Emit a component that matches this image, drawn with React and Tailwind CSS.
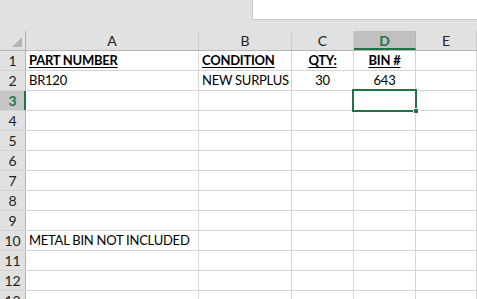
import React from 'react';

const COLS = [
  { key: 'A', width: 'w-[173px]' },
  { key: 'B', width: 'w-[93px]' },
  { key: 'C', width: 'w-[62px]' },
  { key: 'D', width: 'w-[62px]' },
  { key: 'E', width: 'flex-1' },
];

const DATA = {
  1: { A: { text: 'PART NUMBER', head: true }, B: { text: 'CONDITION', head: true }, C: { text: 'QTY:', head: true, center: true }, D: { text: 'BIN #', head: true, center: true } },
  2: { A: { text: 'BR120' }, B: { text: 'NEW SURPLUS' }, C: { text: '30', center: true }, D: { text: '643', center: true } },
  10: { A: { text: 'METAL BIN NOT INCLUDED' } },
};

const ROWS = [1, 2, 3, 4, 5, 6, 7, 8, 9, 10, 11, 12, 13];

const Cell = ({ cell, width }) => (
  <div className={`${width} h-full shrink-0 border-r border-[#d4d4d4] relative`}>
    {cell && (
      <span
        className={`absolute bottom-[1px] whitespace-nowrap leading-[17px] ${
          cell.center ? 'left-0 right-0 text-center' : 'left-[3px]'
        } ${cell.head ? 'font-bold underline underline-offset-[2px]' : ''}`}
      >
        {cell.text}
      </span>
    )}
  </div>
);

export default function App() {
  return (
    <div
      className="relative h-[299px] w-[477px] overflow-hidden bg-white text-[13px] tracking-[-0.25px] text-black"
      style={{ fontFamily: 'Lato, "Liberation Sans", Arial, sans-serif' }}
    >
      {/* formula bar strip */}
      <div className="flex h-[31px] bg-[#e1e1e1]">
        <div className="ml-[252px] h-[20px] flex-1 border-b border-l border-[#c6c6c6] bg-white" />
      </div>

      {/* column headers */}
      <div className="flex h-[20px] border-b border-[#b4b4b4] bg-[#e1e1e1] text-[14px] tracking-normal">
        <div className="relative h-full w-[26px] shrink-0 border-r border-[#b4b4b4]">
          <svg className="absolute left-0 top-0" width="25" height="19" viewBox="0 0 25 19">
            <polygon points="22,6 22,16 12,16" fill="#b4b4b4" />
          </svg>
        </div>
        {COLS.map((col) => (
          <div
            key={col.key}
            className={`${col.width} flex h-full shrink-0 items-center justify-center ${
              col.key === 'D'
                ? 'border-b-2 border-r border-b-[#217346] border-r-[#b4b4b4] bg-[#c0c0c0] pt-[2px] font-bold text-[#217346]'
                : 'border-r border-[#cdcdcd] text-[#222]'
            }`}
          >
            {col.key}
          </div>
        ))}
      </div>

      {/* rows */}
      {ROWS.map((row) => (
        <div key={row} className="flex h-[20px] border-b border-[#d4d4d4]">
          <div
            className={`flex h-full w-[26px] shrink-0 items-center justify-center text-[14px] tracking-normal ${
              row === 3
                ? 'border-r-2 border-[#217346] bg-[#c6c6c6] pl-[1px] font-bold text-[#217346]'
                : 'border-r border-[#b4b4b4] bg-[#e1e1e1] text-[#222]'
            }`}
          >
            {row}
          </div>
          {COLS.map((col) => (
            <Cell key={col.key} cell={DATA[row] && DATA[row][col.key]} width={col.width} />
          ))}
        </div>
      ))}

      {/* active cell D3 */}
      <div className="absolute left-[352px] top-[89px] h-[23px] w-[65px] border-2 border-[#217346]">
        <div className="absolute -bottom-[4px] -right-[4px] h-[6px] w-[6px] border border-white bg-[#217346]" />
      </div>
    </div>
  );
}
